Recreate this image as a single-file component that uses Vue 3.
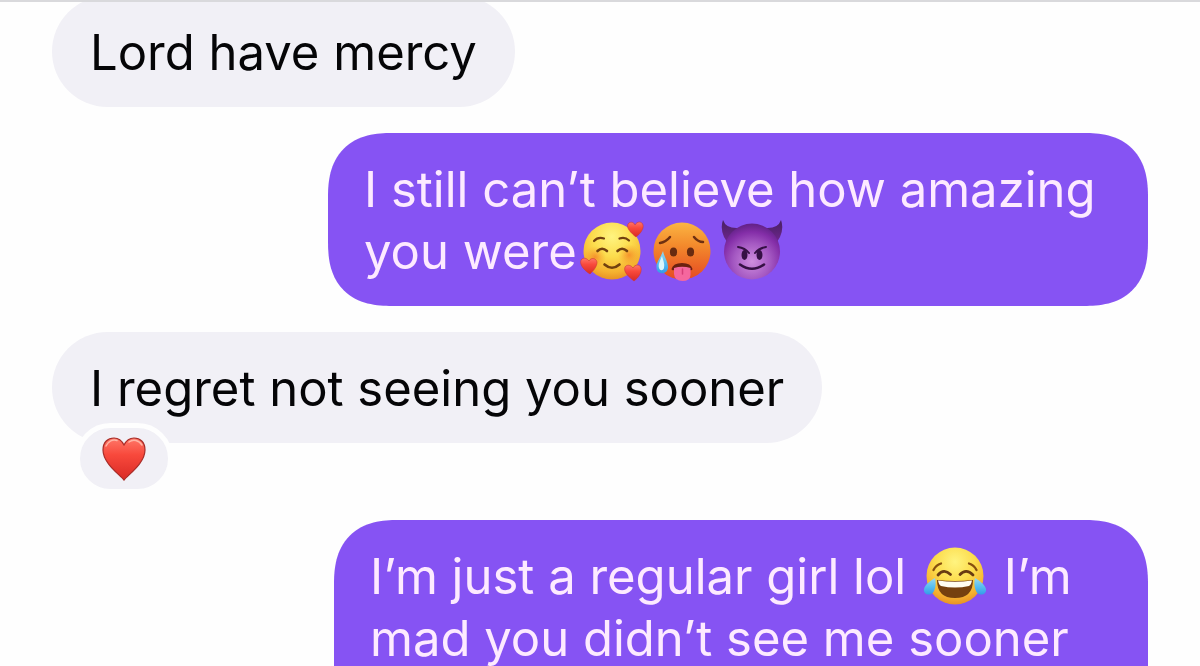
<script setup>
</script>

<template>
  <main class="chat">
    <div class="divider"></div>
    <svg class="defs" aria-hidden="true">
      <defs>
        <radialGradient id="yellow" cx="0.5" cy="0.25" r="0.78">
          <stop offset="0" stop-color="#fff480" />
          <stop offset="0.45" stop-color="#fcdc4c" />
          <stop offset="0.8" stop-color="#f5b12f" />
          <stop offset="1" stop-color="#e58a22" />
        </radialGradient>
        <radialGradient id="blush">
          <stop offset="0" stop-color="#f47a22" stop-opacity="0.7" />
          <stop offset="1" stop-color="#f69a2a" stop-opacity="0" />
        </radialGradient>
        <linearGradient id="hot" x1="0" y1="0" x2="0" y2="1">
          <stop offset="0" stop-color="#fbb543" />
          <stop offset="0.4" stop-color="#f38a2c" />
          <stop offset="1" stop-color="#e64a22" />
        </linearGradient>
        <radialGradient id="devil" cx="0.5" cy="0.68" r="0.66">
          <stop offset="0" stop-color="#cf8ede" />
          <stop offset="0.5" stop-color="#a458c2" />
          <stop offset="0.8" stop-color="#842ea8" />
          <stop offset="1" stop-color="#65238a" />
        </radialGradient>
        <linearGradient id="horn" x1="0" y1="0" x2="0" y2="1">
          <stop offset="0" stop-color="#462060" />
          <stop offset="1" stop-color="#70268f" />
        </linearGradient>
        <linearGradient id="heart" x1="0" y1="0" x2="0" y2="1">
          <stop offset="0" stop-color="#ff7768" />
          <stop offset="0.4" stop-color="#f8493c" />
          <stop offset="1" stop-color="#d92a25" />
        </linearGradient>
        <linearGradient id="tear" x1="0" y1="0" x2="0" y2="1">
          <stop offset="0" stop-color="#9bd9ee" />
          <stop offset="0.5" stop-color="#5abff0" />
          <stop offset="1" stop-color="#349be8" />
        </linearGradient>
      </defs>
    </svg>

    <p class="bubble incoming">Lord have mercy</p>

    <p class="bubble outgoing">
      I still can’t believe how amazing<br>you were<svg class="emoji" viewBox="0 1 70 62" role="img" aria-label="Smiling face with hearts">
        <circle cx="35" cy="31" r="28.5" fill="url(#yellow)" />
        <circle cx="18" cy="37" r="11" fill="url(#blush)" />
        <circle cx="52" cy="35" r="11" fill="url(#blush)" />
        <g fill="none" stroke="#71400f" stroke-width="2.2" stroke-linecap="round">
          <path d="M17 21Q21 16.500 27 18.500M42.500 18.500Q48 16.500 52 20.500" />
          <path d="M20.500 31Q25 26.500 30 31M40.500 31Q45 26.500 50 31" stroke-width="2.600" />
          <path d="M27.500 44.500Q35 51 42.500 44.500" stroke-width="2.600" />
        </g>
        <g fill="url(#heart)" stroke="#cc3736" stroke-width="0.6">
          <path d="M59 17C54 13 49 8 51 4C53 1 57 2 58 5C60 1 65 1 66 5C67 9 63 14 59 17Z" />
          <path d="M13 54C8 51 2 45 4 40C6 37 10 38 12 41C14 37 19 38 20 42C20 47 16 51 13 54Z" />
          <path d="M57 61C52 57 46 52 48 47C50 44 54 45 56 48C58 44 63 44 64 48C65 53 61 58 57 61Z" />
        </g>
      </svg><svg class="emoji" viewBox="0 1 70 62" role="img" aria-label="Hot face">
        <circle cx="35" cy="31" r="28.5" fill="url(#hot)" />
        <path d="M13 23Q19 22 23 17M47 17Q51 22 56 22" fill="none" stroke="#6e3011" stroke-width="2.500" stroke-linecap="round" />
        <ellipse cx="26.500" cy="32" rx="3.600" ry="4.500" fill="#682b10" />
        <ellipse cx="43.500" cy="32" rx="3.600" ry="4.500" fill="#682b10" />
        <path d="M24.500 49Q26 43 35 43Q44 43 45.500 49Q45 51 43 50H27Q25 51 24.500 49Z" fill="#6b210f" />
        <path d="M27 48Q35 45.500 43.500 48V55Q43 61 35.500 61Q27.500 61 27 54Z" fill="#f5679e" />
        <path d="M35.500 49V54" stroke="#d63e78" stroke-width="1.500" stroke-linecap="round" />
        <path d="M16 31C14 37 9 42 9.500 48C10 55 20 55 21 48C21.500 42 17 37 16 31Z" fill="url(#tear)" />
        <path d="M15 36C13 41 11 44 12 48C13 51 16 51 17 48C18 44 16 40 15 36Z" fill="#d9f5fb" />
      </svg><svg class="emoji" viewBox="0 1 70 62" role="img" aria-label="Smiling face with horns">
        <path d="M7 17Q3 8 6 0Q9 9 22 8L10 22ZM63 17Q67 8 64 0Q61 9 48 8L60 22Z" fill="url(#horn)" />
        <circle cx="35" cy="31.500" r="28" fill="url(#devil)" />
        <path d="M21 27Q28 28 32 33M49 27Q42 28 38 33" fill="none" stroke="#351044" stroke-width="2" stroke-linecap="round" />
        <ellipse cx="27.500" cy="35" rx="3" ry="5" fill="#351044" />
        <ellipse cx="42.500" cy="35" rx="3" ry="5" fill="#351044" />
        <path d="M23 44.500Q35 53 47 44.500" fill="none" stroke="#351044" stroke-width="2.600" stroke-linecap="round" />
      </svg>
    </p>

    <div class="message">
      <p class="bubble incoming">I regret not seeing you sooner</p>
      <span class="reaction">
        <svg class="love" viewBox="0 0 44 44" role="img" aria-label="Red heart">
          <path d="M22 43C17 37 1 26 1 13C1 5 6 1 12 1C17 1 20 4 22 8C24 4 27 1 32 1C38 1 43 5 43 13C43 26 27 37 22 43Z" fill="url(#heart)" stroke="#a92d28" stroke-width="1.200" />
          <path d="M4 9C6 4 11 2 15 3.500M27 5C31 2 37 3 40 8" fill="none" stroke="#ffb4a5" stroke-width="1.500" stroke-linecap="round" />
        </svg>
      </span>
    </div>

    <p class="bubble outgoing last">
      I’m just a regular girl lol <svg class="emoji" viewBox="0 1 70 62" role="img" aria-label="Face with tears of joy">
        <circle cx="35" cy="31" r="28.5" fill="url(#yellow)" />
        <path d="M13.500 25Q16 20 21 18.500M49 18.500Q54 20 56.500 25" fill="none" stroke="#87500f" stroke-width="2.300" stroke-linecap="round" />
        <path d="M18 30Q24 23 30.500 29.500M40 29.500Q46 23 53 30" fill="none" stroke="#693b12" stroke-width="2.800" stroke-linecap="round" />
        <path d="M17 35Q35 37 53 35Q53 53 35 53Q17 53 17 35Z" fill="#75400f" />
        <path d="M18 35.500Q35 38 52 35.500Q51 40 49 41Q35 44 21 41Q19 40 18 35.500Z" fill="#fffdf2" />
        <path d="M15 33C12 35 5 39 4 44C3 50 11 52 14 46C16 42 16 37 15 33ZM55 33C58 35 65 39 66 44C67 50 59 52 56 46C54 42 54 37 55 33Z" fill="url(#tear)" />
      </svg> I’m<br>mad you didn’t see me sooner
    </p>
  </main>
</template>

<style>
body {
  margin: 0;
  background: #fff;
}
</style>

<style scoped>
.chat {
  display: flex;
  flex-direction: column;
  align-items: flex-start;
  gap: 26px;
  box-sizing: border-box;
  height: 100vh;
  padding: 0 52px;
  overflow: hidden;
  background: #fefefe;
  font-family: Inter, "Liberation Sans", sans-serif;
  font-size: 49px;
  line-height: 62px;
}
.divider {
  position: absolute;
  top: 0;
  left: 0;
  width: 100%;
  height: 2px;
  background: #d9d9dc;
}
.defs {
  position: absolute;
  width: 0;
  height: 0;
}
.bubble {
  flex: none;
  box-sizing: border-box;
  margin: 0;
  padding: 26px 38px 23px;
  border-radius: 56px;
  white-space: nowrap;
}
.incoming {
  background: #f1f0f6;
  color: #050507;
}
.chat > .incoming {
  margin-top: -4px;
}
.outgoing {
  align-self: flex-end;
  width: 820px;
  max-width: 100%;
  padding-left: 36px;
  border-radius: 64px;
  corner-shape: superellipse(1.3);
  background: #8653f3;
  color: #fdeaff;
}
.last {
  width: 814px;
  padding-bottom: 86px;
}
.message {
  display: flex;
  flex: none;
  flex-direction: column;
  align-items: flex-start;
}
.reaction {
  display: flex;
  align-items: center;
  justify-content: center;
  width: 88px;
  height: 61px;
  margin: -20px 0 0 23px;
  border: 5px solid #fefefe;
  border-radius: 36px;
  background: #f1f0f6;
}
.love {
  width: 44px;
  height: 44px;
}
.emoji {
  width: 70px;
  height: 62px;
  overflow: visible;
  vertical-align: top;
}
</style>
